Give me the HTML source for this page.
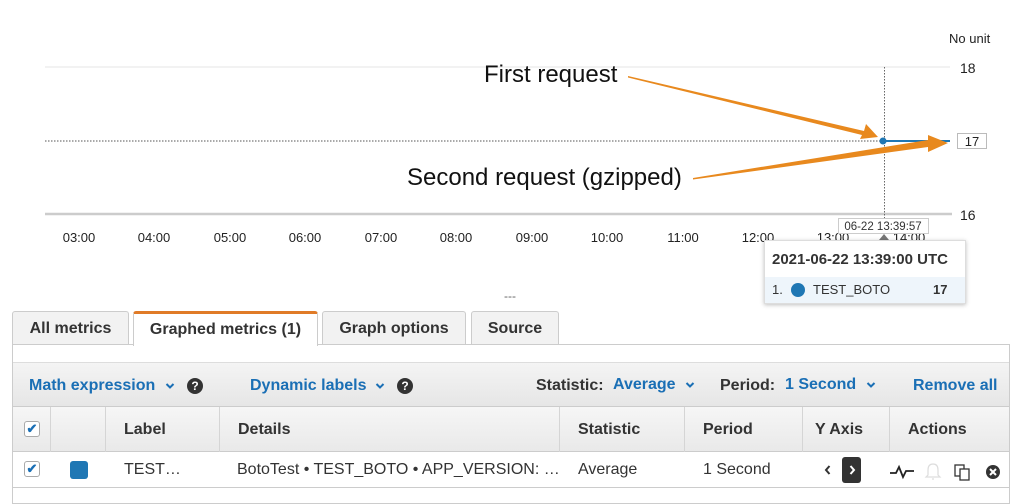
<!DOCTYPE html>
<html><head><meta charset="utf-8">
<style>
*{margin:0;padding:0;box-sizing:border-box}
body{width:1024px;height:498px;background:#fff;font-family:"Liberation Sans",Arial,sans-serif;position:relative;overflow:hidden;color:#222}
.a{position:absolute;white-space:nowrap}
.tab{position:absolute;top:311px;height:34px;border:1px solid #ccc;border-bottom:none;background:#f2f2f2;border-radius:3px 3px 0 0;font-weight:bold;font-size:16px;color:#333;text-align:center;line-height:33px}
.blue{color:#1a6fb5;font-weight:bold;font-size:16px}
.lbl{color:#333;font-weight:bold;font-size:16px}
.hd{position:absolute;top:421px;font-weight:bold;font-size:16px;color:#333}
.vd{position:absolute;top:407px;width:1px;height:45px;background:#d5d5d5}
.cell{position:absolute;top:461px;font-size:16px;color:#333}
.chk{position:absolute;width:16px;height:16px;border:1px solid #aaa;border-radius:3px;background:#fff}
.chev{position:absolute;top:382px}
</style></head><body>
<svg class="a" style="left:0;top:0" width="1024" height="310">
<text x="949" y="43" font-size="13" fill="#222" font-family="Liberation Sans">No unit</text>
<line x1="45" y1="67" x2="950" y2="67" stroke="#eee" stroke-width="1.5"/>
<text x="960" y="73" font-size="14" fill="#222" font-family="Liberation Sans">18</text>
<line x1="45" y1="141" x2="880" y2="141" stroke="#555" stroke-width="1" stroke-dasharray="1.5,1.5"/>
<rect x="957.5" y="133.5" width="29" height="15" fill="#fff" stroke="#bbb"/>
<text x="972" y="146" font-size="13" fill="#222" text-anchor="middle" font-family="Liberation Sans">17</text>
<line x1="45" y1="214" x2="952" y2="214" stroke="#ccc" stroke-width="2.5"/>
<text x="960" y="220" font-size="14" fill="#222" font-family="Liberation Sans">16</text>
<g font-size="13" fill="#222" text-anchor="middle" font-family="Liberation Sans">
<text x="79" y="242">03:00</text><text x="154" y="242">04:00</text><text x="230" y="242">05:00</text><text x="305" y="242">06:00</text><text x="381" y="242">07:00</text><text x="456" y="242">08:00</text><text x="532" y="242">09:00</text><text x="607" y="242">10:00</text><text x="683" y="242">11:00</text><text x="758" y="242">12:00</text><text x="833" y="242">13:00</text><text x="909" y="242">14:00</text>
</g>
<line x1="884.5" y1="67" x2="884.5" y2="240" stroke="#666" stroke-dasharray="1.5,1.5"/>
<line x1="883" y1="141" x2="950" y2="141" stroke="#1f77b4" stroke-width="2"/>
<circle cx="883" cy="141" r="3.5" fill="#1f77b4"/>
<rect x="838.5" y="218.5" width="90" height="15" fill="#fff" stroke="#ccc"/>
<text x="883" y="230" font-size="11.5" fill="#333" text-anchor="middle" font-family="Liberation Sans">06-22 13:39:57</text>
<polygon points="879,240 884,234 889,240" fill="#777"/>
<text x="484" y="82" font-size="24" fill="#111" font-family="Liberation Sans">First request</text>
<text x="407" y="185" font-size="24" fill="#111" font-family="Liberation Sans">Second request (gzipped)</text>
<polygon points="628,76 628,77.5 862,135 860,139 878,137 866,124 864,131" fill="#e8891e"/>
<polygon points="693,178 693,179.5 928,147 928,152 948,143 928,135 928,140" fill="#e8891e"/>
<text x="510" y="300" font-size="12" fill="#666" text-anchor="middle" font-family="Liberation Sans">---</text>
</svg>
<div class="a" style="left:764px;top:240px;width:202px;height:64px;background:#fff;border:1px solid #ddd;box-shadow:0 1px 4px rgba(0,0,0,.25)">
<div style="position:absolute;left:7px;top:10px;font-weight:bold;font-size:15px;color:#333">2021-06-22 13:39:00 UTC</div>
<div style="position:absolute;left:0;top:36px;width:200px;height:26px;background:#eef5fb"></div>
<div style="position:absolute;left:7px;top:41px;font-size:13px;color:#333">1.</div>
<div style="position:absolute;left:26px;top:42px;width:14px;height:14px;border-radius:50%;background:#1f77b4"></div>
<div style="position:absolute;left:48px;top:41px;font-size:13px;color:#333">TEST_BOTO</div>
<div style="position:absolute;left:168px;top:41px;font-size:13px;font-weight:bold;color:#333">17</div>
</div>
<div class="tab" style="left:12px;width:117px">All metrics</div>
<div class="tab" style="left:133px;width:185px;background:#fff;border-top:3px solid #e07b28;height:35px;line-height:31px;z-index:2">Graphed metrics (1)</div>
<div class="tab" style="left:322px;width:144px">Graph options</div>
<div class="tab" style="left:471px;width:88px">Source</div>
<div class="a" style="left:12px;top:344px;width:998px;height:160px;border:1px solid #ccc;background:#fff"></div>
<div class="a" style="left:13px;top:362px;width:996px;height:45px;background:linear-gradient(#f4f4f4,#e6e6e6);border-top:1px solid #ddd;border-bottom:1px solid #ccc"></div>
<div class="a blue" style="left:29px;top:377px">Math expression</div>
<svg class="chev" style="left:165px" width="10" height="8"><path d="M1.5,2 L5,5.5 L8.5,2" fill="none" stroke="#1a6fb5" stroke-width="2"/></svg>
<div class="a" style="left:187px;top:378px;width:16px;height:16px;border-radius:50%;background:#333;color:#fff;font-size:12px;font-weight:bold;text-align:center;line-height:16px">?</div>
<div class="a blue" style="left:250px;top:377px">Dynamic labels</div>
<svg class="chev" style="left:375px" width="10" height="8"><path d="M1.5,2 L5,5.5 L8.5,2" fill="none" stroke="#1a6fb5" stroke-width="2"/></svg>
<div class="a" style="left:397px;top:378px;width:16px;height:16px;border-radius:50%;background:#333;color:#fff;font-size:12px;font-weight:bold;text-align:center;line-height:16px">?</div>
<div class="a lbl" style="left:536px;top:377px">Statistic:</div>
<div class="a blue" style="left:613px;top:376px">Average</div>
<svg class="chev" style="left:685px;top:381px" width="10" height="8"><path d="M1.5,2 L5,5.5 L8.5,2" fill="none" stroke="#1a6fb5" stroke-width="2"/></svg>
<div class="a lbl" style="left:720px;top:377px">Period:</div>
<div class="a blue" style="left:785px;top:376px">1 Second</div>
<svg class="chev" style="left:866px;top:381px" width="10" height="8"><path d="M1.5,2 L5,5.5 L8.5,2" fill="none" stroke="#1a6fb5" stroke-width="2"/></svg>
<div class="a blue" style="left:913px;top:377px">Remove all</div>
<div class="a" style="left:13px;top:407px;width:996px;height:45px;background:linear-gradient(#f6f6f6,#e9e9e9);border-bottom:1px solid #ccc"></div>
<div class="vd" style="left:50px"></div><div class="vd" style="left:105px"></div><div class="vd" style="left:219px"></div><div class="vd" style="left:559px"></div><div class="vd" style="left:684px"></div><div class="vd" style="left:802px"></div><div class="vd" style="left:889px"></div>
<div class="chk" style="left:24px;top:421px;color:#1a6fb5;font-size:13px;line-height:14px;text-align:center;font-weight:bold">&#10004;</div>
<div class="hd" style="left:124px">Label</div>
<div class="hd" style="left:238px">Details</div>
<div class="hd" style="left:578px">Statistic</div>
<div class="hd" style="left:703px">Period</div>
<div class="hd" style="left:815px">Y Axis</div>
<div class="hd" style="left:908px">Actions</div>
<div class="a" style="left:13px;top:487px;width:996px;height:1px;background:#ccc"></div>
<div class="chk" style="left:24px;top:461px;color:#1a6fb5;font-size:13px;line-height:14px;text-align:center;font-weight:bold">&#10004;</div>
<div class="a" style="left:70px;top:461px;width:18px;height:18px;border-radius:3px;background:#1f77b4"></div>
<div class="cell" style="left:124px">TEST…</div>
<div class="cell" style="left:237px">BotoTest • TEST_BOTO • APP_VERSION: …</div>
<div class="cell" style="left:578px">Average</div>
<div class="cell" style="left:703px">1 Second</div>
<svg class="a" style="left:823px;top:464px" width="10" height="12"><path d="M6.5,2 L3,6 L6.5,10" fill="none" stroke="#333" stroke-width="2"/></svg>
<div class="a" style="left:842px;top:457px;width:19px;height:26px;border-radius:3px;background:#333"></div>
<svg class="a" style="left:847px;top:464px" width="10" height="12"><path d="M3.5,2 L7,6 L3.5,10" fill="none" stroke="#fff" stroke-width="2"/></svg>
<svg class="a" style="left:888px;top:460px" width="122" height="22">
<polyline points="2,13 8,13 11,7 15,17 18,11 26,11" fill="none" stroke="#222" stroke-width="1.8"/>
<path d="M40,15 L40,10 Q40,4 45,4 Q50,4 50,10 L50,15 L52,17 L38,17 Z M44,19 L46,19" fill="none" stroke="#ddd" stroke-width="1.2"/>
<rect x="67" y="5" width="9" height="11" fill="#fff" stroke="#333" stroke-width="1.3"/>
<rect x="72" y="9" width="9" height="11" fill="#fff" stroke="#333" stroke-width="1.3"/>
<circle cx="105" cy="12" r="7" fill="#333"/>
<path d="M102,9 L108,15 M108,9 L102,15" stroke="#fff" stroke-width="2"/>
</svg>
</body></html>
